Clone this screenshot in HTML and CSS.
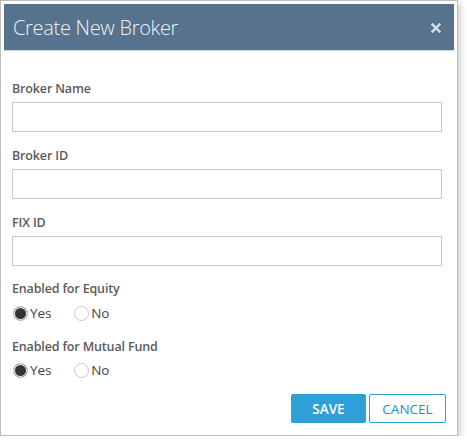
FILE: index.html
```html
<!DOCTYPE html>
<html>
<head>
<meta charset="utf-8">
<link rel="stylesheet" href="styles.css">
</head>
<body>
<div class="dialog">
  <div class="header">
    <span class="title">Create New Broker</span>
    <svg class="close" width="10" height="10" viewBox="0 0 10 10"><path d="M1.5 1.5 L8.5 8.5 M8.5 1.5 L1.5 8.5" stroke="#d3dde6" stroke-width="2.4" stroke-linecap="square"/></svg>
  </div>
  <div class="body">
    <div class="field">
      <label class="label">Broker Name</label>
      <div class="input"></div>
    </div>
    <div class="field">
      <label class="label">Broker ID</label>
      <div class="input"></div>
    </div>
    <div class="field">
      <label class="label">FIX ID</label>
      <div class="input"></div>
    </div>
    <div class="field radios-field">
      <label class="label">Enabled for Equity</label>
      <div class="radios">
        <span class="radio"><span class="dot checked"></span>Yes</span>
        <span class="radio"><span class="dot"></span>No</span>
      </div>
    </div>
    <div class="field radios-field">
      <label class="label">Enabled for Mutual Fund</label>
      <div class="radios">
        <span class="radio"><span class="dot checked"></span>Yes</span>
        <span class="radio"><span class="dot"></span>No</span>
      </div>
    </div>
    <div class="actions">
      <button class="btn save">SAVE</button>
      <button class="btn cancel">CANCEL</button>
    </div>
  </div>
</div>
</body>
</html>
```
FILE: styles.css
```css
html, body {
  margin: 0;
  background: #ffffff;
}
body {
  font-family: "Open Sans", "Noto Sans", sans-serif;
}
.dialog {
  box-sizing: border-box;
  width: 458px;
  height: 436px;
  border: 1px solid #bcbcbc;
  padding: 3px;
  background: #fff;
  box-shadow: 3px 3px 6px rgba(0,0,0,0.18);
}
.header {
  height: 47px;
  background: #56728d;
  display: flex;
  align-items: center;
  justify-content: space-between;
  padding: 0 13px 0 9px;
  border-bottom: 1px solid #cfd8e0;
  box-sizing: border-box;
}
.title {
  font-family: "Open Sans", sans-serif;
  font-weight: 300;
  font-size: 20px;
  color: #eef2f5;
  letter-spacing: -0.3px;
}
.close {
  display: block;
  margin-top: 1px;
}
.body {
  padding: 29px 0 0 8px;
}
.field {
  display: flex;
  flex-direction: column;
  margin-bottom: 15px;
}
.label {
  font-size: 12.5px;
  font-weight: 600;
  color: #5a5a5a;
  line-height: 18px;
  margin-bottom: 4px;
  letter-spacing: -0.15px;
}
.input {
  box-sizing: border-box;
  width: 430px;
  height: 30px;
  border: 1px solid #c8c8c8;
  background: #fff;
}
.field:nth-child(3) {
  margin-bottom: 14px;
}
.radios-field {
  margin-bottom: 16px;
}
.radios-field .label {
  margin-bottom: 6px;
}
.radios-field:nth-child(5) .label {
  margin-bottom: 5px;
}
.radios-field:nth-child(5) {
  margin-bottom: 15px;
}
.radios {
  display: flex;
  gap: 22px;
}
.radio {
  display: flex;
  align-items: center;
  font-size: 13.5px;
  color: #444;
  line-height: 18px;
  letter-spacing: -0.1px;
}
.dot {
  box-sizing: border-box;
  width: 15px;
  height: 15px;
  border-radius: 50%;
  border: 1px solid #c9c9c9;
  margin: 0 2px 0 1px;
  background: #fff;
}
.dot.checked {
  background: #333;
  box-shadow: inset 0 0 0 1px #fff;
}
.actions {
  display: flex;
  justify-content: flex-end;
  gap: 3px;
  padding-right: 8px;
}
.btn {
  box-sizing: border-box;
  height: 29px;
  font-family: "Open Sans", sans-serif;
  font-size: 13.5px;
  border-radius: 2px;
  cursor: pointer;
  padding: 0;
}
.save {
  width: 75px;
  background: #2f9fd7;
  border: 1px solid #2f9fd7;
  color: #fff;
  font-weight: 600;
}
.cancel {
  width: 77px;
  background: #fff;
  border: 1px solid #2f9fd7;
  color: #2a8fc5;
}
```
